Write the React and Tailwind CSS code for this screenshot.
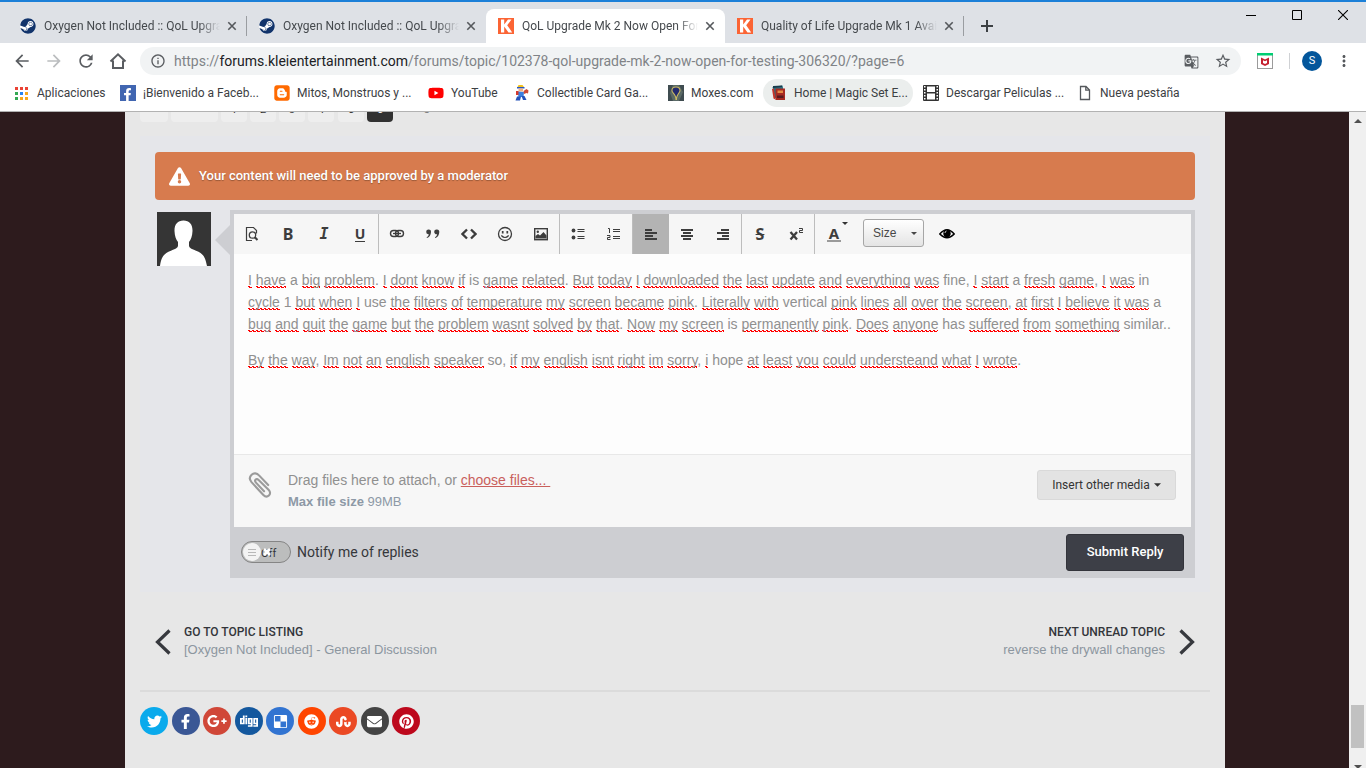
import React from "react";
import {
  FaSteam, FaTwitter, FaFacebookF, FaGooglePlusG, FaDigg, FaDelicious, FaReddit,
  FaStumbleupon, FaEnvelope, FaPinterest, FaExclamationTriangle, FaBlogger, FaYoutube,
} from "react-icons/fa";
import {
  MdArrowBack, MdArrowForward, MdRefresh, MdInfoOutline, MdGTranslate, MdStarBorder, MdMoreVert,
} from "react-icons/md";

const SteamIcon = () => (
  <span className="flex size-4 shrink-0 items-center justify-center rounded-full bg-white">
    <FaSteam className="size-4 text-[#12346b]" />
  </span>
);

const KleiIcon = () => (
  <svg viewBox="0 0 16 16" className="size-4 shrink-0" aria-hidden="true">
    <rect width="16" height="16" fill="#fb6434" />
    <path d="M3 1.500h3.200v5L10 1.500h3.500L9.200 7.200l5 7.300h-3.700L6.200 8.500v6H3z" fill="#fff" />
  </svg>
);

const tabs = [
  { title: "Oxygen Not Included :: QoL Upgrade", Icon: SteamIcon, line: true },
  { title: "Oxygen Not Included :: QoL Upgrade", Icon: SteamIcon },
  { title: "QoL Upgrade Mk 2 Now Open For Testing", Icon: KleiIcon, active: true },
  { title: "Quality of Life Upgrade Mk 1 Available", Icon: KleiIcon, line: true },
];

function Tab({ title, Icon, active, line }) {
  return (
    <div className={`relative flex h-[34px] w-[239px] min-w-0 items-center pl-3 pr-[7px] ${active ? "rounded-t-lg bg-white" : ""}`}>
      <Icon />
      <a
        href="#tab"
        className="ml-2 min-w-0 flex-1 overflow-hidden whitespace-nowrap text-[12px] leading-4 text-[#45494d] [mask-image:linear-gradient(90deg,#000_88%,transparent)]"
      >
        {title}
      </a>
      <button aria-label="Close tab" className="ml-1 flex size-4 shrink-0 items-center justify-center text-[#55585c]">
        <svg viewBox="0 0 10 10" className="size-[10px]"><path d="M1.300 1.300l7.400 7.400M8.700 1.300L1.300 8.700" stroke="currentColor" strokeWidth="1.600" /></svg>
      </button>
      {line && <span className="absolute right-0 top-[7px] h-5 w-px bg-[#9a9da1]" />}
    </div>
  );
}

function TabStrip() {
  return (
    <div className="flex h-[43px] shrink-0 items-end justify-between border-t-2 border-[#1c80d8] bg-[#dee1e6]">
      <div className="flex items-end pl-2">
        {tabs.map((t, i) => <Tab key={i} {...t} />)}
        <button aria-label="New tab" className="ml-[11px] flex h-[34px] w-6 items-center justify-center text-[#3c4043]">
          <svg viewBox="0 0 12 12" className="size-3"><path d="M6 0v12M0 6h12" stroke="currentColor" strokeWidth="2" /></svg>
        </button>
      </div>
      <div className="flex self-start text-black">
        <button aria-label="Minimize" className="flex h-[26px] w-[46px] items-center justify-center">
          <svg viewBox="0 0 10 10" className="size-[10px]"><path d="M0 5.500h10" stroke="currentColor" /></svg>
        </button>
        <button aria-label="Maximize" className="flex h-[26px] w-[46px] items-center justify-center">
          <svg viewBox="0 0 10 10" className="size-[10px]"><path d="M.5.5h9v9h-9z" stroke="currentColor" fill="none" /></svg>
        </button>
        <button aria-label="Close" className="flex h-[26px] w-[46px] items-center justify-center">
          <svg viewBox="0 0 10 10" className="size-[10px]"><path d="M0 0l10 10M10 0L0 10" stroke="currentColor" strokeWidth="1.100" /></svg>
        </button>
      </div>
    </div>
  );
}

function AddressBar() {
  const nav = "flex size-8 items-center justify-center text-[#5a5d61]";
  return (
    <div className="flex h-9 shrink-0 items-center bg-white pl-[6px] pr-[6px]">
      <button aria-label="Back" className={nav}><MdArrowBack className="size-5" /></button>
      <button aria-label="Forward" className="flex size-8 items-center justify-center text-[#bbbdbf]"><MdArrowForward className="size-5" /></button>
      <button aria-label="Reload" className={nav}><MdRefresh className="size-5" /></button>
      <button aria-label="Home" className={nav}>
        <svg viewBox="0 0 18 18" className="size-[18px]" fill="none" stroke="currentColor" strokeWidth="2"><path d="M1.500 9.500L9 2.300l7.500 7.200M4 8.500V16h10V8.500" /></svg>
      </button>
      <div className="ml-[6px] flex h-7 min-w-0 flex-1 items-center rounded-full bg-[#f1f3f4] px-[10px] text-[#5a5d61]">
        <MdInfoOutline className="size-4 shrink-0" />
        <div className="ml-2 min-w-0 flex-1 truncate text-[14px] leading-5 text-[#808387]">
          https://<span className="text-[#202124]">forums.kleientertainment.com</span>/forums/topic/102378-qol-upgrade-mk-2-now-open-for-testing-306320/?page=6
        </div>
        <button aria-label="Translate" className="flex w-8 justify-center"><MdGTranslate className="size-[15px]" /></button>
        <button aria-label="Bookmark" className="ml-2"><MdStarBorder className="size-4 scale-110" /></button>
      </div>
      <button aria-label="McAfee WebAdvisor" className="ml-4">
        <svg viewBox="0 0 16 16" className="size-4">
          <rect x=".5" y=".5" width="15" height="15" fill="#fff" stroke="#9b9b9b" />
          <rect width="16" height="2.500" fill="#00ce73" />
          <path d="M4 4.500l4 2 4-2v6.500l-4 2-4-2zM6 7.300v2.700l2 1 2-1V7.300l-2 1z" fill="#c4202f" fillRule="evenodd" />
        </svg>
      </button>
      <span className="ml-4 h-4 w-px bg-[#cfd1d4]" />
      <button aria-label="Profile" className="ml-3 flex size-5 items-center justify-center rounded-full bg-[#03569b] text-[11px] leading-4 text-white">S</button>
      <button aria-label="Menu" className="ml-[6px] flex w-8 justify-center text-[#55585c]"><MdMoreVert className="size-[18px]" /></button>
    </div>
  );
}

const AppsIcon = () => (
  <svg viewBox="0 0 13 13" className="mr-[2px] h-[13px] w-[13px] shrink-0">
    {["#ea4335", "#ea4335", "#ea4335", "#34a853", "#2684f0", "#f7a81b", "#34a853", "#f7a81b", "#f7a81b"].map((c, i) => (
      <rect key={i} x={(i % 3) * 5} y={Math.floor(i / 3) * 5} width="3" height="3" fill={c} />
    ))}
  </svg>
);
const FbIcon = () => (
  <span className="flex size-4 shrink-0 items-end justify-end bg-[#4166b1] pr-[2px]"><FaFacebookF className="size-[13px] text-white" /></span>
);
const BloggerIcon = () => (
  <span className="flex size-4 shrink-0 items-center justify-center overflow-hidden rounded-[3px]"><FaBlogger className="size-4 shrink-0 scale-110 text-[#ff6a00]" /></span>
);
const YtIcon = () => <FaYoutube className="size-4 shrink-0 text-[#ff0000]" />;
const SmithIcon = () => (
  <svg viewBox="0 0 16 16" className="size-4 shrink-0">
    <path d="M4.500 0h4l1.500 2H3.500z" fill="#f4c21c" /><path d="M3 2h7.500v1.500H3z" fill="#2758c4" />
    <path d="M4.500 3.500H9v3H4.500z" fill="#f3b183" />
    <path d="M3.500 6.500l6.500.500-.5 5h-5z" fill="#3b7fe0" /><path d="M2 6h2.500v4H2z" fill="#d43a2e" />
    <path d="M9.500 6l3-2 2 1.500-.5 3-1.500-.5-2.500 1z" fill="#cf4b36" />
    <path d="M3 11.500h4L6 15.500H1.500zM7.500 11h3l2 4H9z" fill="#2453ba" />
  </svg>
);
const MoxIcon = () => (
  <svg viewBox="0 0 16 16" className="size-4 shrink-0">
    <rect width="16" height="16" fill="#5b6a66" /><path d="M0 0h5L2 8l3 8H0zM16 0h-5l4 7-4 9h5z" fill="#3f4c50" />
    <path d="M8 1.500c3 0 4.500 1.500 4.500 4C12.500 8 9 9.500 9 15H7.500C7.500 9.500 3.500 8 3.500 5.500c0-2.500 1.500-4 4.500-4z" fill="#cdbb62" />
    <path d="M8 2.500c2.700 0 3.500 1.500 3.500 3S9 9 8.200 12C7.500 9 4.500 7.200 4.500 5.500s.8-3 3.500-3z" fill="#232a6e" />
  </svg>
);
const MagicIcon = () => (
  <svg viewBox="0 0 16 16" className="size-4 shrink-0">
    <path d="M1.500 2l10-1.500L14 12 4 13z" fill="#287082" /><path d="M1 4l2-.5 1.500 11-2-1z" fill="#c53126" />
    <path d="M4.500 3.500H14V15H4.500z" fill="#a72a22" /><path d="M6.500 5.500H12V8H6.500z" fill="#e58b45" /><path d="M6 10.500h6.500V13H6z" fill="#571b20" />
    <path d="M2 1l9-.500v1.500L2 3z" fill="#183a4b" />
  </svg>
);
const FilmIcon = () => (
  <svg viewBox="0 0 16 16" className="size-4 shrink-0">
    <rect width="16" height="16" rx="1" fill="#333" /><path d="M4 1.500h8V7H4zM4 8.500h8v6H4z" fill="#fff" />
    {[1.5, 4.5, 7.5, 10.5, 13.5].map((y) => <path key={y} d={`M1 ${y - 0.5}h1.500v1.500H1zM13.500 ${y - 0.5}H15v1.500h-1.500z`} fill="#fff" />)}
  </svg>
);
const PageIcon = () => (
  <svg viewBox="0 0 16 16" className="size-4 shrink-0" fill="none" stroke="#55585c" strokeWidth="1.300"><path d="M3.500 1.500h5.500l3.500 3.500v9.500h-9zM8.800 1.500v3.700h3.700" /></svg>
);

const bookmarks = [
  { label: "Aplicaciones", Icon: AppsIcon, w: "w-[105px]" },
  { label: "¡Bienvenido a Faceb...", Icon: FbIcon, w: "w-[154px]" },
  { label: "Mitos, Monstruos y ...", Icon: BloggerIcon, w: "w-[154px]" },
  { label: "YouTube", Icon: YtIcon, w: "w-[86px]" },
  { label: "Collectible Card Ga...", Icon: SmithIcon, w: "w-[154px]" },
  { label: "Moxes.com", Icon: MoxIcon, w: "w-[103px]" },
  { label: "Home | Magic Set E...", Icon: MagicIcon, w: "w-[150px]", hover: true },
  { label: "Descargar Peliculas ...", Icon: FilmIcon, w: "ml-[2px] w-[154px]" },
  { label: "Nueva pestaña", Icon: PageIcon, w: "w-[120px]" },
];

function BookmarksBar() {
  return (
    <nav className="flex h-[33px] shrink-0 items-start border-b border-[#b2b2b2] bg-white pl-[7px]">
      {bookmarks.map(({ label, Icon, w, hover }) => (
        <a key={label} href="#bookmark" className={`flex h-7 items-center gap-[7px] whitespace-nowrap rounded-full pl-2 text-[12px] leading-4 text-[#3c4043] ${w} ${hover ? "bg-[#ebeeed]" : ""}`}>
          <Icon />
          <span>{label}</span>
        </a>
      ))}
    </nav>
  );
}

const pages = [
  ["«", "w-7 mr-[3px]"], ["PREV", "w-[47px] mr-[3px]"], ["1", "w-[26px] mr-[3px]"], ["2", "w-[26px] mr-[3px]"],
  ["3", "w-[26px] mr-[3px]"], ["4", "w-[26px] mr-1"], ["5", "w-[26px] mr-[3px]"],
];

function Pagination() {
  return (
    <div className="flex h-[10px] items-end overflow-hidden text-[11px] leading-[28px] text-[#333]">
      {pages.map(([p, c]) => (
        <a key={p} href="#page" className={`h-[26px] rounded-sm bg-[#eeeeee] text-center ${c} ${p === "PREV" ? "leading-[26px]" : ""}`}>{p}</a>
      ))}
      <a href="#page" className="h-[26px] w-[26px] rounded-sm bg-[#323232] text-center text-white">6</a>
      <span className="ml-[18px] h-[26px] leading-6 text-[#777]">Page 6 of 6</span>
    </div>
  );
}

function Svg({ children, className = "size-4" }) {
  return <svg viewBox="0 0 16 16" className={className} fill="none" stroke="currentColor" aria-hidden="true">{children}</svg>;
}

const AlignIcon = ({ side }) => {
  const widths = side === "left" ? [7, 12, 8, 12] : side === "center" ? [12, 8, 12, 8] : [8, 12, 7, 12];
  return (
    <Svg>
      {widths.map((w, i) => {
        const x = side === "left" ? 2 : side === "center" ? 8 - w / 2 : 14 - w;
        return <rect key={i} x={x} y={3 + i * 3} width={w} height="2" fill="currentColor" stroke="none" />;
      })}
    </Svg>
  );
};

const groups = [
  [
    ["Preview source", <Svg><path d="M8 14.500H2.500v-13h7l3 3v3" strokeWidth="1.200" /><circle cx="8.500" cy="9" r="3.200" strokeWidth="1.300" /><path d="M10.800 11.300l2.700 2.700" strokeWidth="2" /></Svg>],
    ["Bold", <span className="font-['Noto_Sans','Open_Sans',sans-serif] text-[16px] font-bold leading-5">B</span>],
    ["Italic", <span className="font-['DejaVu_Sans_Mono',monospace] text-[15px] font-bold italic leading-5">I</span>],
    ["Underline", <span className="border-b border-current font-['Noto_Sans','Open_Sans',sans-serif] text-[14px] font-bold leading-[14px]">U</span>],
  ],
  [
    ["Link", <Svg><rect x="1.500" y="4.500" width="8" height="6" rx="3" strokeWidth="1.400" /><rect x="6.500" y="4.500" width="8" height="6" rx="3" strokeWidth="1.400" /><path d="M4 7.500h8" strokeWidth="1.300" /></Svg>],
    ["Quote", <Svg><path d="M3.500 3.500a2.200 2.200 0 0 1 2.500 2.400c0 3-1.800 5.300-4 6.100l-.4-.8c1.300-.7 2-1.700 2.200-3A2.300 2.300 0 0 1 1.200 5.800 2.300 2.300 0 0 1 3.500 3.500zM11.500 3.500a2.200 2.200 0 0 1 2.800 2.400c0 3-1.800 5.300-4 6.100l-.4-.8c1.300-.7 2-1.700 2.200-3a2.300 2.300 0 0 1-2.900-2.400 2.300 2.300 0 0 1 2.300-2.300z" fill="currentColor" stroke="none" /></Svg>],
    ["Code", <Svg><path d="M6 3.500L1.500 8 6 12.500M10 3.500L14.500 8 10 12.500" strokeWidth="2.300" /></Svg>],
    ["Emoji", <Svg><circle cx="8" cy="8" r="6.500" strokeWidth="1.300" /><path d="M5.700 5v2.500M10.300 5v2.500" strokeWidth="1.700" /><path d="M4.300 9.500q3.700 4 7.400 0" strokeWidth="1.200" /></Svg>],
    ["Image", <Svg><rect x="1.700" y="2.700" width="12.600" height="11" strokeWidth="1.400" /><circle cx="4.800" cy="5.800" r="1.200" fill="currentColor" stroke="none" /><path d="M2.500 12.500V10l2.500-2 2 1.500L10.500 6l3 3.500v3z" fill="currentColor" stroke="none" /></Svg>],
  ],
  [
    ["Bulleted list", <Svg><circle cx="3.500" cy="4.500" r="1.900" fill="currentColor" stroke="none" /><circle cx="3.500" cy="11.500" r="1.900" fill="currentColor" stroke="none" /><path d="M7.500 3.500h7M7.500 5.500h7M7.500 10.500h7M7.500 12.500h7" /></Svg>],
    ["Numbered list", <Svg><path d="M2 2.500h1.500V7M1 9.500h3v2H1.500v2H4.500M7 3.500h7M7 5.500h7M7 10.500h7M7 12.500h7" /></Svg>],
  ],
  [
    ["Align left", <AlignIcon side="left" />, true],
    ["Align center", <AlignIcon side="center" />],
    ["Align right", <AlignIcon side="right" />],
  ],
  [
    ["Strikethrough", <span className="font-['Noto_Sans','Open_Sans',sans-serif] text-[16px] font-bold leading-5"><s>S</s></span>],
    ["Superscript", <Svg className="h-4 w-4"><path d="M2.500 6l6.500 7.500M9 6l-6.500 7.500" strokeWidth="2.300" /><path d="M11 2.500h3.500v2h-3v2H15" /></Svg>],
  ],
];

function EditorToolbar() {
  return (
    <div role="toolbar" className="flex h-10 items-stretch bg-[#f6f6f6] text-[#3d3d3d]">
      {groups.map((g, i) => (
        <div key={i} className="flex border-r border-[#bdbdbd]">
          {g.map(([label, icon, on]) => (
            <button key={label} aria-label={label} className={`flex w-9 items-center justify-center ${on ? "bg-[#b3b3b3]" : ""}`}>{icon}</button>
          ))}
        </div>
      ))}
      <button aria-label="Text color" className="relative flex w-9 items-center justify-center pl-[2px]">
        <span className="border-b-2 border-[#9a9a9a] px-[2px] font-['Noto_Sans','Open_Sans',sans-serif] text-[15px] font-bold leading-[14px]">A</span>
        <svg viewBox="0 0 6 3" className="absolute right-[3px] top-2 h-[3px] w-[6px]"><path d="M0 0h6L3 3z" fill="#333" /></svg>
      </button>
      <div className="relative ml-3 flex items-start pt-[5px]">
        <select aria-label="Size" className="h-7 w-[61px] appearance-none rounded-[3px] border border-[#a6a6a6] bg-linear-to-b from-white to-[#e4e4e4] pl-[9px] font-['Liberation_Sans',Arial,sans-serif] text-[12px] leading-4 text-[#474747]">
          <option>Size</option>
        </select>
        <svg viewBox="0 0 6 3" className="pointer-events-none absolute right-[7px] top-[18px] h-[3px] w-[6px]"><path d="M0 0h6L3 3z" fill="#474747" /></svg>
      </div>
      <button aria-label="Preview" className="ml-[5px] flex w-9 items-center justify-center text-black">
        <Svg><path d="M.8 8Q8-.5 15.200 8 8 15.500.8 8z" strokeWidth="1.500" /><circle cx="8" cy="7.500" r="3.700" fill="currentColor" stroke="none" /><path d="M6 7a2 2 0 0 1 1.500-2" stroke="#fff" strokeWidth=".8" /></Svg>
      </button>
    </div>
  );
}

const known = new Set(["a", "is", "fine", "in", "1", "use", "vertical", "has", "similar", "so", "hope"]);
const lines = [
  "I have a big problem. I dont know if is game related. But today I downloaded the last update and everything was fine, I start a fresh game, I was in",
  "cycle 1 but when I use the filters of temperature my screen became pink. Literally with vertical pink lines all over the screen, at first I believe it was a",
  "bug and quit the game but the problem wasnt solved by that. Now my screen is permanently pink. Does anyone has suffered from something similar..",
];
const closing = "By the way, Im not an english speaker so, if my english isnt right im sorry, i hope at least you could understeand what I wrote.";

function Spelled({ text }) {
  return text.split(/([A-Za-z0-9]+)/).map((part, i) =>
    /[A-Za-z0-9]/.test(part) && !known.has(part) ? (
      <span
        key={i}
        className="bg-[linear-gradient(90deg,#f00_50%,transparent_50%),linear-gradient(90deg,transparent_25%,#f00_25%)] bg-[length:4px_1px,4px_1px] bg-[position:0_calc(100%_-_1px),0_100%] bg-repeat-x"
      >
        {part}
      </span>
    ) : part
  );
}

function Composer() {
  return (
    <div className="relative ml-[19px] min-w-0 flex-1 border-4 border-[#cdced2] bg-[#cdced2]">
      <svg viewBox="0 0 15 30" className="absolute -left-[19px] top-[11px] h-[30px] w-[15px]"><path d="M15 0v30L0 15z" fill="#cdced2" /></svg>
      <EditorToolbar />
      <div
        role="textbox"
        aria-label="Reply"
        contentEditable
        suppressContentEditableWarning
        spellCheck={false}
        className="min-h-[200px] whitespace-nowrap bg-[#fdfdfd] px-[14px] pt-[15px] font-['Liberation_Sans',Arial,sans-serif] text-[14px] leading-[22px] text-[#909090] outline-none"
      >
        <p>{lines.map((l) => <React.Fragment key={l}><Spelled text={l} /><br /></React.Fragment>)}</p>
        <p className="mt-[14px]"><Spelled text={closing} /></p>
      </div>
      <div className="flex h-[73px] items-start border-t border-[#e8e8e8] bg-[#f7f7f7] pl-[14px] pr-[15px] pt-[15px] font-['Liberation_Sans',Arial,sans-serif]">
        <svg viewBox="0 0 24 28" className="mt-[2px] h-[27px] w-6 shrink-0" fill="none" stroke="#9b9b9b" strokeWidth="2.200" strokeLinecap="round">
          <path d="M20.500 13.500L11 3.500C8.800 1 5.500.800 3.300 2.800 1 5 1 8 3.200 10.500l12.300 13.300c1.800 1.900 4 2.200 5.700.600 1.700-1.600 1.600-3.900-.100-5.700L10.600 8.300c-1-1.100-2.200-1.300-3.100-.400-.9.900-.7 2 .3 3.100l8.400 9" />
        </svg>
        <div className="ml-4 flex-1 text-[14px] leading-[21px] text-[#909090]">
          <p>Drag files here to attach, or <a href="#files" className="whitespace-pre text-[#c9605c] underline">choose files... </a></p>
          <p className="text-[13px] text-[#8d99a6]"><b>Max file size</b> 99MB</p>
        </div>
        <button className="flex h-[30px] w-[139px] items-center justify-center gap-1 rounded-[3px] border border-[#d9d9d9] bg-[#e3e3e3] font-['Roboto',sans-serif] text-[12px] leading-4 text-[#333]">
          Insert other media
          <svg viewBox="0 0 8 4" className="h-1 w-[7px]"><path d="M0 0h8L4 4z" fill="currentColor" /></svg>
        </button>
      </div>
      <div className="flex h-[47px] items-center pl-[7px] pr-[7px] pt-[3px]">
        <label className="flex items-center text-[14px] leading-5 text-[#35373b]">
          <span className="relative flex h-[22px] w-[50px] items-center overflow-hidden rounded-full border border-[#858585] bg-[#bcbdbd]">
            <input type="checkbox" className="peer absolute inset-0 size-full cursor-pointer opacity-0" />
            <span className="ml-px flex size-[18px] items-center justify-center rounded-full bg-[#f3f3f3]">
              <svg viewBox="0 0 8 7" className="h-[7px] w-2"><path d="M0 .5h8M0 3.500h8M0 6.500h8" stroke="#b8b8b8" /></svg>
            </span>
            <span className="mt-[3px] text-[11px] leading-4">Off</span>
            <svg viewBox="0 0 8 8" className="absolute left-[21px] top-[6px] size-2"><path d="M1 1l6 6M7 1L1 7" stroke="#fff" strokeWidth="2.600" /></svg>
          </span>
          <span className="ml-[6px]">Notify me of replies</span>
        </label>
        <button className="ml-auto h-[37px] w-[118px] rounded-[3px] border border-[#33343b] bg-[#3d3f47] text-[13px] font-medium leading-5 text-white">Submit Reply</button>
      </div>
    </div>
  );
}

const social = [
  ["Twitter", FaTwitter, "bg-[#0aaaec]"],
  ["Facebook", FaFacebookF, "bg-[#3a5795]"],
  ["Google+", FaGooglePlusG, "bg-[#d04738]"],
  ["Digg", FaDigg, "bg-[#14589e]"],
  ["Delicious", FaDelicious, "bg-[#3274d1]"],
  ["Reddit", FaReddit, "bg-[#ff4500]"],
  ["StumbleUpon", FaStumbleupon, "bg-[#eb4924]"],
  ["Email", FaEnvelope, "bg-[#444444]"],
  ["Pinterest", FaPinterest, "bg-[#bd081c]"],
];

function Forum() {
  return (
    <main className="min-w-0 flex-1 overflow-hidden bg-[#2d1b1d] pl-[125px] pr-[124px] font-['Roboto',sans-serif]">
      <div className="h-full bg-[#e7e7e7] px-[15px]">
        <Pagination />
        <section className="mt-[14px] bg-[#e5e6ea] px-[15px] pb-[14px] pt-4">
          <div className="flex h-12 items-center rounded-sm bg-[#d77b4e] pl-[14px] text-[13px] font-medium leading-5 text-white">
            <FaExclamationTriangle className="size-[21px]" />
            <span className="ml-[9px] [text-shadow:0_1px_1px_rgba(0,0,0,.3)]">Your content will need to be approved by a moderator</span>
          </div>
          <div className="mt-[10px] flex items-start">
            <svg viewBox="0 0 54 54" role="img" aria-label="Avatar" className="ml-[2px] mt-[2px] size-[54px] shrink-0">
              <rect width="54" height="54" fill="#353535" />
              <path d="M26.500 8.500c6 0 9.200 4 9 10.500-.2 5-1.500 8.500-3.500 11v3.500c0 2.500 3 3.500 7 5.200 7 2.800 9 5.300 11 15.300H3c1.500-10 4-12.500 11-15.300 4-1.700 7-2.700 7-5.200V30c-2-2.500-3.300-6-3.500-11-.2-6.500 3-10.500 9-10.500z" fill="#fff" />
            </svg>
            <Composer />
          </div>
        </section>
        <nav className="mt-8 flex items-center px-[15px] font-['Liberation_Sans',Arial,sans-serif] text-[13px] leading-[18px] text-[#8c969f]">
          <svg viewBox="0 0 16 26" className="h-[26px] w-4" fill="none" stroke="#37393e" strokeWidth="3.200"><path d="M14.500 1.500L2.500 13l12 11.500" /></svg>
          <a href="#listing" className="ml-[13px] block"><span className="block font-['Roboto',sans-serif] text-[12px] font-medium leading-[17px] text-[#33353a]">GO TO TOPIC LISTING</span>[Oxygen Not Included] - General Discussion</a>
          <a href="#next" className="ml-auto mr-[14px] block text-right"><span className="block font-['Roboto',sans-serif] text-[12px] font-medium leading-[17px] text-[#33353a]">NEXT UNREAD TOPIC</span>reverse the drywall changes</a>
          <svg viewBox="0 0 16 26" className="h-[26px] w-4" fill="none" stroke="#37393e" strokeWidth="3.200"><path d="M1.500 1.500L13.500 13l-12 11.500" /></svg>
        </nav>
        <hr className="mt-[31px] border-t-2 border-[#dbdbdb]" />
        <div className="mt-[15px] flex w-[280px] justify-between">
          {social.map(([name, Icon, bg]) => (
            <a key={name} href="#share" aria-label={name} className={`flex size-7 items-center justify-center rounded-full text-white ${bg}`}>
              <Icon className={name === "Google+" ? "size-5" : name === "Digg" ? "size-[18px]" : "size-[15px]"} />
            </a>
          ))}
        </div>
      </div>
    </main>
  );
}

export default function App() {
  return (
    <div className="flex h-screen flex-col overflow-hidden font-['Roboto','Noto_Sans',sans-serif]">
      <TabStrip />
      <AddressBar />
      <BookmarksBar />
      <div className="flex min-h-0 flex-1">
        <Forum />
        <div className="flex w-[17px] shrink-0 flex-col items-center bg-[#f0f0f0] pt-[7px]">
          <svg viewBox="0 0 8 4" className="h-1 w-2"><path d="M0 4l4-4 4 4z" fill="#505050" /></svg>
          <div className="mb-[17px] mt-auto h-[43px] w-[13px] bg-[#c1c1c1]" />
          <svg viewBox="0 0 8 4" className="-mb-[1px] h-1 w-2 shrink-0"><path d="M0 0h8L4 4z" fill="#505050" /></svg>
        </div>
      </div>
    </div>
  );
}
